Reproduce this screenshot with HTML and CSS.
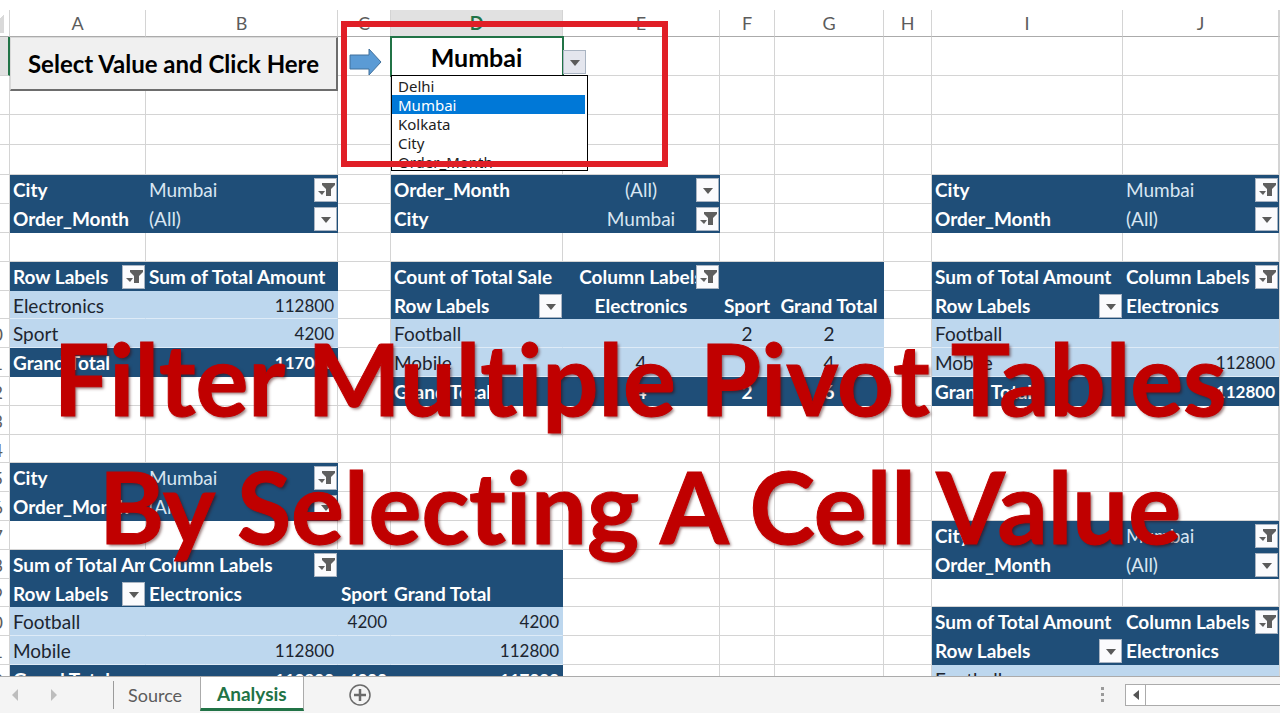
FILE: index.html
```html
<!DOCTYPE html>
<html lang="en">
<head>
    <meta charset="utf-8">
    <title>Filter Multiple Pivot Tables</title>
    <link rel="stylesheet" href="styles.css">
</head>
<body>
    <!-- shared icons -->
    <svg class="defs" aria-hidden="true">
        <symbol id="down" viewBox="0 0 20 20">
            <path d="M5 8h10l-5 6z" fill="#5a5a5a"/>
        </symbol>
        <symbol id="funnel" viewBox="0 0 20 20">
            <path d="M6 3h13v2l-4 4v7h-5v-7l-4-4z" fill="#5f5f5f"/>
            <path d="M2 11h7l-3 4z" fill="#5f5f5f"/>
        </symbol>
    </svg>

    <main class="sheet">
        <table class="grid">
            <colgroup>
                <col class="c-num"><col class="c-a"><col class="c-b"><col class="c-c"><col class="c-d"><col class="c-e">
                <col class="c-f"><col class="c-g"><col class="c-h"><col class="c-i"><col class="c-j"><col>
            </colgroup>
            <thead>
                <tr><th class="corner"></th><th>A</th><th>B</th><th>C</th><th class="active">D</th><th>E</th><th>F</th><th>G</th><th>H</th><th>I</th><th>J</th><th></th></tr>
            </thead>
            <tbody>
                <tr class="tall">
                    <th class="active">1</th>
                    <td class="host"><button class="run" type="button">Select Value and Click Here</button></td>
                    <td></td>
                    <td class="host">
                        <svg class="arrow" viewBox="0 0 34 30" aria-hidden="true"><path d="M1 8h19V2l12 13-12 13v-6H1z" fill="#5b9bd5" stroke="#41719c"/></svg>
                    </td>
                    <td class="host picked">
                        <label for="city">Mumbai</label>
                        <button class="filter open" type="button" aria-label="Open list"><svg><use href="#down"/></svg></button>
                        <select id="city" class="list" size="5">
                            <option>Delhi</option>
                            <option selected>Mumbai</option>
                            <option>Kolkata</option>
                            <option>City</option>
                            <option>Order_Month</option>
                        </select>
                    </td>
                    <td></td><td></td><td></td><td></td><td></td><td></td><td></td>
                </tr>
                <tr class="tall"><th>2</th><td></td><td></td><td></td><td></td><td></td><td></td><td></td><td></td><td></td><td></td><td></td></tr>
                <tr class="mid"><th>3</th><td></td><td></td><td></td><td></td><td></td><td></td><td></td><td></td><td></td><td></td><td></td></tr>
                <tr class="mid"><th>4</th><td></td><td></td><td></td><td></td><td></td><td></td><td></td><td></td><td></td><td></td><td></td></tr>
                <tr>
                    <th>5</th>
                    <td class="head">City</td>
                    <td class="head value">Mumbai <button class="filter" type="button" aria-label="Filter city"><svg><use href="#funnel"/></svg></button></td>
                    <td></td>
                    <td class="head">Order_Month</td>
                    <td class="head value center">(All) <button class="filter" type="button" aria-label="Filter month"><svg><use href="#down"/></svg></button></td>
                    <td></td><td></td><td></td>
                    <td class="head">City</td>
                    <td class="head value">Mumbai <button class="filter" type="button" aria-label="Filter city"><svg><use href="#funnel"/></svg></button></td>
                    <td></td>
                </tr>
                <tr>
                    <th>6</th>
                    <td class="head">Order_Month</td>
                    <td class="head value">(All) <button class="filter" type="button" aria-label="Filter month"><svg><use href="#down"/></svg></button></td>
                    <td></td>
                    <td class="head">City</td>
                    <td class="head value center">Mumbai <button class="filter" type="button" aria-label="Filter city"><svg><use href="#funnel"/></svg></button></td>
                    <td></td><td></td><td></td>
                    <td class="head">Order_Month</td>
                    <td class="head value">(All) <button class="filter" type="button" aria-label="Filter month"><svg><use href="#down"/></svg></button></td>
                    <td></td>
                </tr>
                <tr><th>7</th><td></td><td></td><td></td><td></td><td></td><td></td><td></td><td></td><td></td><td></td><td></td></tr>
                <tr>
                    <th>8</th>
                    <td class="head">Row Labels <button class="filter" type="button" aria-label="Filter rows"><svg><use href="#funnel"/></svg></button></td>
                    <td class="head">Sum of Total Amount</td>
                    <td></td>
                    <td class="head">Count of Total Sale</td>
                    <td class="head center">Column Labels<button class="filter" type="button" aria-label="Filter columns"><svg><use href="#funnel"/></svg></button></td>
                    <td class="head"></td>
                    <td class="head"></td>
                    <td></td>
                    <td class="head">Sum of Total Amount</td>
                    <td class="head">Column Labels <button class="filter" type="button" aria-label="Filter columns"><svg><use href="#funnel"/></svg></button></td>
                    <td></td>
                </tr>
                <tr>
                    <th>9</th>
                    <td class="data">Electronics</td>
                    <td class="data right">112800</td>
                    <td></td>
                    <td class="head">Row Labels <button class="filter" type="button" aria-label="Filter rows"><svg><use href="#down"/></svg></button></td>
                    <td class="head center">Electronics</td>
                    <td class="head center">Sport</td>
                    <td class="head center">Grand Total</td>
                    <td></td>
                    <td class="head">Row Labels <button class="filter" type="button" aria-label="Filter rows"><svg><use href="#down"/></svg></button></td>
                    <td class="head">Electronics</td>
                    <td></td>
                </tr>
                <tr>
                    <th>10</th>
                    <td class="data">Sport</td>
                    <td class="data right">4200</td>
                    <td></td>
                    <td class="data">Football</td>
                    <td class="data"></td>
                    <td class="data center">2</td>
                    <td class="data center">2</td>
                    <td></td>
                    <td class="data">Football</td>
                    <td class="data"></td>
                    <td></td>
                </tr>
                <tr>
                    <th>11</th>
                    <td class="head">Grand Total</td>
                    <td class="head right">117000</td>
                    <td></td>
                    <td class="data">Mobile</td>
                    <td class="data center">4</td>
                    <td class="data"></td>
                    <td class="data center">4</td>
                    <td></td>
                    <td class="data">Mobile</td>
                    <td class="data right">112800</td>
                    <td></td>
                </tr>
                <tr>
                    <th>12</th>
                    <td></td><td></td><td></td>
                    <td class="head">Grand Total</td>
                    <td class="head center">4</td>
                    <td class="head center">2</td>
                    <td class="head center">6</td>
                    <td></td>
                    <td class="head">Grand Total</td>
                    <td class="head right">112800</td>
                    <td></td>
                </tr>
                <tr><th>13</th><td></td><td></td><td></td><td></td><td></td><td></td><td></td><td></td><td></td><td></td><td></td></tr>
                <tr><th>14</th><td></td><td></td><td></td><td></td><td></td><td></td><td></td><td></td><td></td><td></td><td></td></tr>
                <tr>
                    <th>15</th>
                    <td class="head">City</td>
                    <td class="head value">Mumbai <button class="filter" type="button" aria-label="Filter city"><svg><use href="#funnel"/></svg></button></td>
                    <td></td><td></td><td></td><td></td><td></td><td></td><td></td><td></td><td></td>
                </tr>
                <tr>
                    <th>16</th>
                    <td class="head">Order_Month</td>
                    <td class="head value">(All) <button class="filter" type="button" aria-label="Filter month"><svg><use href="#down"/></svg></button></td>
                    <td></td><td></td><td></td><td></td><td></td><td></td><td></td><td></td><td></td>
                </tr>
                <tr>
                    <th>17</th>
                    <td></td><td></td><td></td><td></td><td></td><td></td><td></td><td></td>
                    <td class="head">City</td>
                    <td class="head value">Mumbai <button class="filter" type="button" aria-label="Filter city"><svg><use href="#funnel"/></svg></button></td>
                    <td></td>
                </tr>
                <tr>
                    <th>18</th>
                    <td class="head">Sum of Total Amount</td>
                    <td class="head">Column Labels <button class="filter" type="button" aria-label="Filter columns"><svg><use href="#funnel"/></svg></button></td>
                    <td class="head"></td>
                    <td class="head"></td>
                    <td></td><td></td><td></td><td></td>
                    <td class="head">Order_Month</td>
                    <td class="head value">(All) <button class="filter" type="button" aria-label="Filter month"><svg><use href="#down"/></svg></button></td>
                    <td></td>
                </tr>
                <tr>
                    <th>19</th>
                    <td class="head">Row Labels <button class="filter" type="button" aria-label="Filter rows"><svg><use href="#down"/></svg></button></td>
                    <td class="head">Electronics</td>
                    <td class="head">Sport</td>
                    <td class="head">Grand Total</td>
                    <td></td><td></td><td></td><td></td><td></td><td></td><td></td>
                </tr>
                <tr>
                    <th>20</th>
                    <td class="data">Football</td>
                    <td class="data"></td>
                    <td class="data right">4200</td>
                    <td class="data right">4200</td>
                    <td></td><td></td><td></td><td></td>
                    <td class="head">Sum of Total Amount</td>
                    <td class="head">Column Labels <button class="filter" type="button" aria-label="Filter columns"><svg><use href="#funnel"/></svg></button></td>
                    <td></td>
                </tr>
                <tr>
                    <th>21</th>
                    <td class="data">Mobile</td>
                    <td class="data right">112800</td>
                    <td class="data"></td>
                    <td class="data right">112800</td>
                    <td></td><td></td><td></td><td></td>
                    <td class="head">Row Labels <button class="filter" type="button" aria-label="Filter rows"><svg><use href="#down"/></svg></button></td>
                    <td class="head">Electronics</td>
                    <td></td>
                </tr>
                <tr>
                    <th>22</th>
                    <td class="head">Grand Total</td>
                    <td class="head right">112800</td>
                    <td class="head right">4200</td>
                    <td class="head right">117000</td>
                    <td></td><td></td><td></td><td></td>
                    <td class="data">Football</td>
                    <td class="data"></td>
                    <td></td>
                </tr>
            </tbody>
        </table>

        <div class="marker"></div>
        <h1 class="caption">Filter Multiple Pivot Tables<br>By Selecting A Cell Value</h1>
    </main>

    <footer class="tabs">
        <div class="nav">
            <button type="button" aria-label="Previous sheet"><svg width="6" height="12" viewBox="0 0 6 12"><path d="M6 0v12L0 6z" fill="#bdbdbd"/></svg></button>
            <button type="button" aria-label="Next sheet"><svg width="6" height="12" viewBox="0 0 6 12"><path d="M0 0v12l6-6z" fill="#bdbdbd"/></svg></button>
        </div>
        <a class="tab" href="#source">Source</a>
        <a class="tab current" href="#analysis">Analysis</a>
        <button class="add" type="button" aria-label="New sheet">
            <svg width="24" height="24" viewBox="0 0 24 24" fill="none" stroke="#6a6a6a"><circle cx="12" cy="12" r="10" stroke-width="1.5"/><path d="M12 6v12M6 12h12" stroke-width="2.5"/></svg>
        </button>
        <svg class="dots" width="4" height="16" viewBox="0 0 4 16" fill="#9a9a9a"><path d="M0 0h3v3H0zM0 6h3v3H0zM0 12h3v3H0z"/></svg>
        <div class="scroll">
            <button type="button" aria-label="Scroll left"><svg width="6" height="10" viewBox="0 0 6 10"><path d="M6 0v10L0 5z" fill="#555"/></svg></button>
        </div>
    </footer>
</body>
</html>
```
FILE: styles.css
```css
* {
    box-sizing: border-box;
}
body {
    margin: 0;
    padding: 10px 0 7px;
    height: 100vh;
    display: flex;
    flex-direction: column;
    background: #fff;
    font-family: Lato, Carlito, sans-serif;
    font-size: 19px;
    font-variant-ligatures: none;
    color: #1c2530;
}
button {
    font-family: inherit;
    padding: 0;
    border: none;
    background: none;
    display: flex;
    align-items: center;
    justify-content: center;
}
.defs {
    position: absolute;
    width: 0;
    height: 0;
}

/* worksheet */
.sheet {
    flex: 1;
    min-height: 0;
    position: relative;
    overflow: hidden;
    border-bottom: 1px solid #ababab;
}
.grid {
    /* row numbers are partly scrolled out of view */
    margin-left: -24px;
    width: calc(100% + 24px);
    table-layout: fixed;
    border-collapse: separate;
    border-spacing: 0;
}
.c-num { width: 34px; }
.c-a { width: 136px; }
.c-b { width: 192px; }
.c-c { width: 53px; }
.c-d { width: 172px; }
.c-e { width: 157px; }
.c-f { width: 55px; }
.c-g { width: 109px; }
.c-h { width: 48px; }
.c-i { width: 191px; }
.c-j { width: 156px; }

.grid th,
.grid td {
    padding: 2px 3px 0;
    border-right: 1px solid #d4d4d4;
    border-bottom: 1px solid #d4d4d4;
    line-height: 22px;
    white-space: nowrap;
    overflow: hidden;
}
.grid th {
    font-size: 18px;
    font-weight: 400;
    color: #5c5c5c;
    padding-left: 0;
    padding-right: 0;
    text-align: center;
}
.grid thead th {
    height: 27px;
    padding: 0 0 1px;
    border-bottom-color: #ababab;
}
.grid thead .active {
    background: #e1e1e1;
    color: #217346;
    font-weight: 700;
}
.grid thead .corner {
    background: linear-gradient(to top left, #d9d9d9 50%, #fff 50%) no-repeat 10px 5px / 18px 18px;
}
tbody th {
    border-right-color: #9b9b9b;
}
.grid tbody .active {
    background: #e1e1e1;
    border-right: 2px solid #217346;
}
tbody tr {
    height: 29px;
}
tbody tr:nth-child(5n+4) {
    height: 28px;
}
tbody .tall {
    height: 39px;
}
tbody tr.mid {
    height: 30px;
}
.grid .head {
    position: relative;
    background: #1f4e78;
    border-color: #1f4e78;
    color: #fff;
    font-weight: 700;
}
.grid .value {
    color: #d9e6f2;
    font-weight: 400;
}
.grid .data {
    background: #bdd7ee;
    border-right-color: #bdd7ee;
    border-bottom-color: #deebf7;
}
.grid .center {
    text-align: center;
}
.grid .right {
    text-align: right;
    font-size: 17px;
}
.grid .host {
    position: relative;
    overflow: visible;
}

.filter {
    position: absolute;
    top: 3px;
    right: 0;
    width: 23px;
    height: 24px;
    background: #fbfbfd;
    border: 1px solid #a9b4c2;
}
.filter svg {
    width: 20px;
    height: 20px;
}

/* first row controls */
.run {
    position: absolute;
    z-index: 1;
    top: 0;
    left: 0;
    width: 328px;
    height: 54px;
    background: #f0f0f0;
    border: 1px solid #d9d9d9;
    border-right: 2px solid #6d6d6d;
    border-bottom: 2px solid #6d6d6d;
    color: #000;
    font-size: 24px;
    font-weight: 700;
}
.arrow {
    position: absolute;
    top: 10px;
    left: 11px;
    width: 34px;
    height: 30px;
}
.grid .picked {
    outline: 2px solid #217346;
    outline-offset: -1px;
    text-align: center;
    color: #000;
    font-size: 25px;
    font-weight: 700;
}
.filter.open {
    top: 13px;
    right: -24px;
    background: #e4e6ee;
}
.list {
    position: absolute;
    z-index: 1;
    top: 38px;
    left: 0;
    width: 197px;
    height: 96px;
    padding: 0 2px 0 0;
    border: 1px solid #000;
    border-radius: 0;
    outline: none;
    overflow: hidden;
    background: #fff;
    font-family: "Noto Sans", sans-serif;
    font-size: 15px;
    font-weight: 400;
}
.list option {
    height: 19px;
    min-height: 19px;
    line-height: 19px;
    padding: 0 6px;
    color: #222;
    text-align: left;
}
.list option:checked {
    background: #0078d7 linear-gradient(#0078d7, #0078d7);
    color: #fff;
}

/* drawn over the worksheet */
.marker {
    position: absolute;
    z-index: 2;
    top: 11px;
    left: 341px;
    width: 327px;
    height: 146px;
    border: 6px solid #e01f27;
}
.caption {
    position: absolute;
    z-index: 3;
    top: 304px;
    left: 0;
    right: 0;
    margin: 0;
    text-align: center;
    white-space: nowrap;
    font-size: 99px;
    line-height: 128px;
    font-weight: 700;
    color: #c00000;
    -webkit-text-stroke: 1px #c00000;
    text-shadow: 2px 2px 3px rgba(60, 0, 0, 0.5);
    pointer-events: none;
}

/* sheet tabs */
.tabs {
    display: flex;
    align-items: center;
    height: 36px;
    background: #f4f4f4;
}
.nav {
    display: flex;
    justify-content: space-between;
    width: 114px;
    height: 28px;
    padding: 0 56px 0 12px;
    border-right: 1px solid #9b9b9b;
}
.tab {
    padding: 0 18px 0 14px;
    font-size: 18px;
    line-height: 28px;
    color: #5c5c5c;
    text-decoration: none;
}
.current {
    align-self: flex-start;
    margin-top: -1px;
    padding: 4px 16px 0;
    border-right: 1px solid #ababab;
    border-left: 1px solid #ababab;
    border-bottom: 3px solid #217346;
    background: #fff;
    color: #217346;
    font-size: 19px;
    font-weight: 700;
}
.add {
    margin-left: 44px;
}
.dots {
    margin-left: auto;
}
.scroll {
    width: 155px;
    height: 22px;
    margin-left: 20px;
    border: 1px solid #ababab;
    border-right: none;
    background: #fff;
}
.scroll button {
    width: 20px;
    height: 20px;
    border-right: 1px solid #ababab;
}
```
